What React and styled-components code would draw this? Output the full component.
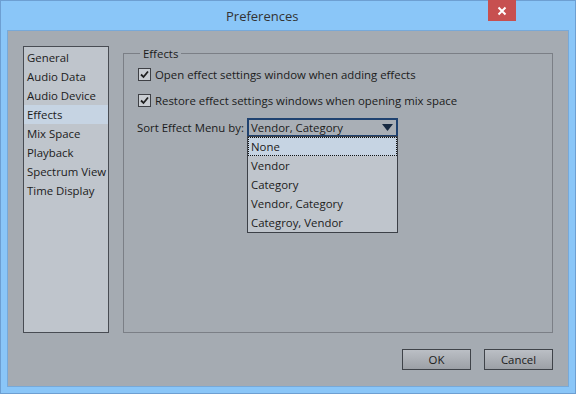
import styled, { createGlobalStyle } from "styled-components";

const GlobalStyle = createGlobalStyle`
  html, body {
    margin: 0;
    padding: 0;
    background: #8ac6f8;
  }
  body {
    font-family: "Open Sans", "Noto Sans", sans-serif;
  }
`;

const pages = [
  "General",
  "Audio Data",
  "Audio Device",
  "Effects",
  "Mix Space",
  "Playback",
  "Spectrum View",
  "Time Display",
];

const sortOptions = ["None", "Vendor", "Category", "Vendor, Category", "Categroy, Vendor"];

export default function App() {
  return (
    <>
      <GlobalStyle />
      <Window>
        <TitleBar>
          <Title>Preferences</Title>
          <CloseButton aria-label="Close">
            <svg width="10" height="10" viewBox="0 0 10 10">
              <path d="M1.5 1.5 L8.5 8.5 M8.5 1.5 L1.5 8.5" stroke="#fff" strokeWidth="2" />
            </svg>
          </CloseButton>
        </TitleBar>

        <Client>
          <MainRow>
            <PageList>
              {pages.map((p) => (
                <PageItem key={p} $active={p === "Effects"}>{p}</PageItem>
              ))}
            </PageList>

            <Group>
              <Legend>Effects</Legend>
              <CheckRow>
                <CheckBox><CheckMark /></CheckBox>
                Open effect settings window when adding effects
              </CheckRow>
              <CheckRow $gap>
                <CheckBox><CheckMark /></CheckBox>
                Restore effect settings windows when opening mix space
              </CheckRow>
              <SortRow>
                <SortLabel>Sort Effect Menu by:</SortLabel>
                <SelectWrap>
                  <Select>
                    <SelectValue>Vendor, Category</SelectValue>
                    <svg width="11" height="7" viewBox="0 0 11 7">
                      <path d="M0 0 H11 L5.5 7 Z" fill="#172a42" />
                    </svg>
                  </Select>
                  <DropList>
                    {sortOptions.map((o, i) => (
                      <DropItem key={o} $active={i === 0}>{o}</DropItem>
                    ))}
                  </DropList>
                </SelectWrap>
              </SortRow>
            </Group>
          </MainRow>

          <ButtonRow>
            <Button>OK</Button>
            <Button>Cancel</Button>
          </ButtonRow>
        </Client>
      </Window>
    </>
  );
}

function CheckMark() {
  return (
    <svg width="11" height="11" viewBox="0 0 11 11">
      <path d="M2 5.5 L4.5 8 L9 2.5" stroke="#1f1f1f" strokeWidth="1.8" fill="none" />
    </svg>
  );
}

const Window = styled.div`
  width: 576px;
  height: 394px;
  box-sizing: border-box;
  border: 1px solid #6d9fd2;
  background: #8ac6f8;
  display: flex;
  flex-direction: column;
  padding: 0 6px 6px 6px;
`;

const TitleBar = styled.div`
  height: 29px;
  display: flex;
  align-items: flex-start;
`;

const Title = styled.div`
  margin-left: 219px;
  margin-top: 6px;
  font-family: "Open Sans", sans-serif;
  font-size: 13px;
  color: #333;
`;

const CloseButton = styled.div`
  margin-left: auto;
  margin-right: 53px;
  margin-top: -1px;
  width: 28px;
  height: 21px;
  background: #c75050;
  display: flex;
  align-items: center;
  justify-content: center;
`;

const Client = styled.div`
  flex: 1;
  border: 1px solid #77a9d9;
  background: #a5abb2;
  display: flex;
  flex-direction: column;
  padding: 15px 15px 16px 15px;
`;

const MainRow = styled.div`
  display: flex;
  gap: 14px;
  height: 287px;
`;

const PageList = styled.div`
  width: 86px;
  box-sizing: border-box;
  border: 1px solid #484c53;
  background: #bfc5cc;
  padding-top: 1px;
  display: flex;
  flex-direction: column;
`;

const PageItem = styled.div`
  height: 19px;
  line-height: 19px;
  padding-left: 3px;
  font-size: 11.4px;
  color: #1b1b1b;
  white-space: nowrap;
  background: ${(p) => (p.$active ? "#c6d4e3" : "transparent")};
`;

const Group = styled.fieldset`
  flex: 1;
  margin: 0;
  box-sizing: border-box;
  border: 1px solid #7b7f86;
  padding: 0 0 0 14px;
  display: flex;
  flex-direction: column;
`;

const Legend = styled.legend`
  padding: 0 3px;
  margin-left: 2px;
  font-size: 11.4px;
  line-height: 15px;
  color: #1b1b1b;
`;

const CheckRow = styled.div`
  display: flex;
  align-items: center;
  gap: 4px;
  height: 19px;
  margin-top: ${(p) => (p.$gap ? "7px" : "4px")};
  font-size: 11.4px;
  color: #1b1b1b;
  white-space: nowrap;
`;

const CheckBox = styled.div`
  width: 13px;
  height: 13px;
  box-sizing: border-box;
  border: 1px solid #3e4045;
  background: #c9cdd2;
  display: flex;
  align-items: center;
  justify-content: center;
`;

const SortRow = styled.div`
  display: flex;
  align-items: center;
  margin-top: 8px;
  margin-left: -1px;
  height: 19px;
`;

const SortLabel = styled.span`
  font-size: 11.4px;
  color: #1b1b1b;
  width: 110px;
  white-space: nowrap;
`;

const SelectWrap = styled.div`
  position: relative;
  width: 151px;
`;

const Select = styled.div`
  height: 19px;
  box-sizing: border-box;
  border: 2px solid #1f4270;
  background: #a9afb6;
  display: flex;
  align-items: center;
  justify-content: space-between;
  padding: 0 3px 0 2px;
`;

const SelectValue = styled.span`
  font-size: 11.4px;
  color: #1b1b1b;
`;

const DropList = styled.div`
  position: absolute;
  top: 18px;
  left: 0;
  width: 151px;
  box-sizing: border-box;
  border: 1px solid #3c4047;
  background: #bfc5cc;
  display: flex;
  flex-direction: column;
`;

const DropItem = styled.div`
  height: 19px;
  line-height: 19px;
  box-sizing: border-box;
  padding-left: 3px;
  font-size: 11.4px;
  color: #1b1b1b;
  background: ${(p) => (p.$active ? "#c6d4e3" : "transparent")};
  outline: ${(p) => (p.$active ? "1px dotted #111" : "none")};
  outline-offset: -1px;
`;

const ButtonRow = styled.div`
  display: flex;
  justify-content: flex-end;
  gap: 13px;
  margin-top: 16px;
`;

const Button = styled.div`
  width: 69px;
  height: 21px;
  box-sizing: border-box;
  border: 1px solid #3f4349;
  background: linear-gradient(#bbbfc5, #9ca0a6);
  display: flex;
  align-items: center;
  justify-content: center;
  font-size: 11.4px;
  color: #1b1b1b;
`;
